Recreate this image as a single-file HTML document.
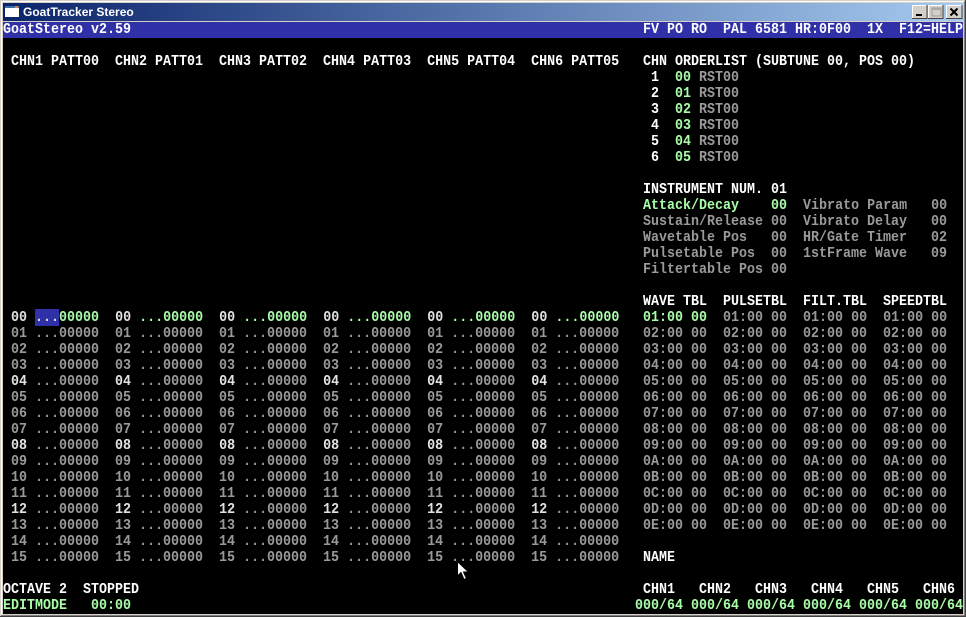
<!DOCTYPE html>
<html><head><meta charset="utf-8"><title>GoatTracker Stereo</title>
<style>
html,body{margin:0;padding:0;background:#000}
body{width:966px;height:617px;position:relative;overflow:hidden}
.a{position:absolute}
pre{position:absolute;margin:0;top:22px;font:bold 15px/16px "Liberation Mono",monospace;color:#fff;transform-origin:0 0;transform:scaleX(.8889);white-space:pre;z-index:2}
span.g{color:#9a9a9a}span.w{color:#e2e2e2}span.n{color:#a8ffa8}span.c{background:#3030a8;color:#e2e2e2}
</style></head><body>
<div class="a" style="left:0;top:0;width:966px;height:617px;background:#d4d0c8"></div>
<div class="a" style="left:1px;top:1px;width:964px;height:1px;background:#fff"></div>
<div class="a" style="left:1px;top:1px;width:1px;height:615px;background:#fff"></div>
<div class="a" style="left:965px;top:0;width:1px;height:617px;background:#404040"></div>
<div class="a" style="left:0;top:616px;width:966px;height:1px;background:#404040"></div>
<div class="a" style="left:964px;top:1px;width:1px;height:615px;background:#808080"></div>
<div class="a" style="left:1px;top:615px;width:964px;height:1px;background:#808080"></div>
<div class="a" style="left:3px;top:3px;width:960px;height:18px;background:linear-gradient(90deg,#0a246a,#a6caf0)"></div>
<svg class="a" style="left:5px;top:5px" width="14" height="13" viewBox="0 0 14 13"><rect x="0" y="0" width="14" height="13" fill="#0a246a"/><rect x="0" y="1" width="14" height="11" fill="#fff"/><rect x="0" y="1" width="14" height="2" fill="#3a6ea5"/><rect x="10" y="1" width="3" height="2" fill="#e08030"/></svg>
<div class="a" style="left:23px;top:4px;font:bold 12px/16px 'Liberation Sans',sans-serif;color:#fff;white-space:pre">GoatTracker Stereo</div>
<svg class="a" style="left:911px;top:5px" width="52" height="14" viewBox="0 0 52 14" shape-rendering="crispEdges">
<g fill="#d4d0c8" stroke="none"><rect x="1" width="15" height="14"/><rect x="17" width="15" height="14"/><rect x="35" width="16" height="14"/></g>
<g fill="none" stroke="#fff"><path d="M1.5 13V.5H16M17.5 13V.5H32M35.5 13V.5H51"/></g>
<g fill="none" stroke="#404040"><path d="M1 13.5H16V0M17 13.5H32V0M35 13.5H51V0"/></g>
<rect x="5" y="9" width="6" height="2" fill="#000"/>
<rect x="21" y="3" width="9" height="8" fill="none" stroke="#9a9a9a"/><rect x="21" y="3" width="9" height="2" fill="#a8a8a8"/>
<path d="M39.5 3.5l7 7M46.5 3.5l-7 7" stroke="#000" stroke-width="2" fill="none" shape-rendering="auto"/></svg>
<div class="a" style="left:3px;top:21px;width:960px;height:1px;background:#d4d0c8"></div>
<div class="a" style="left:3px;top:22px;width:960px;height:592px;background:#000"></div>
<div class="a" style="left:3px;top:22px;width:960px;height:16px;background:#3030a8"></div>
<pre style="left:3px">GoatStereo v2.59

 CHN1 PATT00  CHN2 PATT01  CHN3 PATT02  CHN4 PATT03  CHN5 PATT04  CHN6 PATT05















 <span class="w">00</span> <span class="c">...</span><span class="n">00000</span>  <span class="w">00</span> <span class="n">...00000</span>  <span class="w">00</span> <span class="n">...00000</span>  <span class="w">00</span> <span class="n">...00000</span>  <span class="w">00</span> <span class="n">...00000</span>  <span class="w">00</span> <span class="n">...00000</span>
<span class="g"> 01 ...00000  01 ...00000  01 ...00000  01 ...00000  01 ...00000  01 ...00000</span>
<span class="g"> 02 ...00000  02 ...00000  02 ...00000  02 ...00000  02 ...00000  02 ...00000</span>
<span class="g"> 03 ...00000  03 ...00000  03 ...00000  03 ...00000  03 ...00000  03 ...00000</span>
 <span class="w">04</span><span class="g"> ...00000  </span><span class="w">04</span><span class="g"> ...00000  </span><span class="w">04</span><span class="g"> ...00000  </span><span class="w">04</span><span class="g"> ...00000  </span><span class="w">04</span><span class="g"> ...00000  </span><span class="w">04</span><span class="g"> ...00000</span>
<span class="g"> 05 ...00000  05 ...00000  05 ...00000  05 ...00000  05 ...00000  05 ...00000</span>
<span class="g"> 06 ...00000  06 ...00000  06 ...00000  06 ...00000  06 ...00000  06 ...00000</span>
<span class="g"> 07 ...00000  07 ...00000  07 ...00000  07 ...00000  07 ...00000  07 ...00000</span>
 <span class="w">08</span><span class="g"> ...00000  </span><span class="w">08</span><span class="g"> ...00000  </span><span class="w">08</span><span class="g"> ...00000  </span><span class="w">08</span><span class="g"> ...00000  </span><span class="w">08</span><span class="g"> ...00000  </span><span class="w">08</span><span class="g"> ...00000</span>
<span class="g"> 09 ...00000  09 ...00000  09 ...00000  09 ...00000  09 ...00000  09 ...00000</span>
<span class="g"> 10 ...00000  10 ...00000  10 ...00000  10 ...00000  10 ...00000  10 ...00000</span>
<span class="g"> 11 ...00000  11 ...00000  11 ...00000  11 ...00000  11 ...00000  11 ...00000</span>
 <span class="w">12</span><span class="g"> ...00000  </span><span class="w">12</span><span class="g"> ...00000  </span><span class="w">12</span><span class="g"> ...00000  </span><span class="w">12</span><span class="g"> ...00000  </span><span class="w">12</span><span class="g"> ...00000  </span><span class="w">12</span><span class="g"> ...00000</span>
<span class="g"> 13 ...00000  13 ...00000  13 ...00000  13 ...00000  13 ...00000  13 ...00000</span>
<span class="g"> 14 ...00000  14 ...00000  14 ...00000  14 ...00000  14 ...00000  14 ...00000</span>
<span class="g"> 15 ...00000  15 ...00000  15 ...00000  15 ...00000  15 ...00000  15 ...00000</span>

OCTAVE 2  STOPPED
<span class="n">EDITMODE   00:00</span></pre>
<pre style="left:635px"> FV PO RO  PAL 6581 HR:0F00  1X  F12=HELP

 CHN ORDERLIST (SUBTUNE 00, POS 00)
  1  <span class="n">00</span> <span class="g">RST00</span>
  2  <span class="n">01</span> <span class="g">RST00</span>
  3  <span class="n">02</span> <span class="g">RST00</span>
  4  <span class="n">03</span> <span class="g">RST00</span>
  5  <span class="n">04</span> <span class="g">RST00</span>
  6  <span class="n">05</span> <span class="g">RST00</span>

 INSTRUMENT NUM. 01
 <span class="n">Attack/Decay    00</span>  <span class="g">Vibrato Param   00</span>
<span class="g"> Sustain/Release 00  Vibrato Delay   00</span>
<span class="g"> Wavetable Pos   00  HR/Gate Timer   02</span>
<span class="g"> Pulsetable Pos  00  1stFrame Wave   09</span>
<span class="g"> Filtertable Pos 00</span>

 WAVE TBL  PULSETBL  FILT.TBL  SPEEDTBL
 <span class="n">01:00 00</span>  <span class="g">01:00 00  01:00 00  01:00 00</span>
<span class="g"> 02:00 00  02:00 00  02:00 00  02:00 00</span>
<span class="g"> 03:00 00  03:00 00  03:00 00  03:00 00</span>
<span class="g"> 04:00 00  04:00 00  04:00 00  04:00 00</span>
<span class="g"> 05:00 00  05:00 00  05:00 00  05:00 00</span>
<span class="g"> 06:00 00  06:00 00  06:00 00  06:00 00</span>
<span class="g"> 07:00 00  07:00 00  07:00 00  07:00 00</span>
<span class="g"> 08:00 00  08:00 00  08:00 00  08:00 00</span>
<span class="g"> 09:00 00  09:00 00  09:00 00  09:00 00</span>
<span class="g"> 0A:00 00  0A:00 00  0A:00 00  0A:00 00</span>
<span class="g"> 0B:00 00  0B:00 00  0B:00 00  0B:00 00</span>
<span class="g"> 0C:00 00  0C:00 00  0C:00 00  0C:00 00</span>
<span class="g"> 0D:00 00  0D:00 00  0D:00 00  0D:00 00</span>
<span class="g"> 0E:00 00  0E:00 00  0E:00 00  0E:00 00</span>

 NAME

 CHN1   CHN2   CHN3   CHN4   CHN5   CHN6
<span class="n">000/64 000/64 000/64 000/64 000/64 000/64</span></pre>
<svg class="a" style="left:457px;top:561px;z-index:3" width="13" height="20" viewBox="0 0 13 20"><path d="M.5.5V15L4 11.5 7 18.5 9.5 17.5 6.5 11H11.5Z" fill="#fff" stroke="#000" stroke-width="1"/></svg>
</body></html>
